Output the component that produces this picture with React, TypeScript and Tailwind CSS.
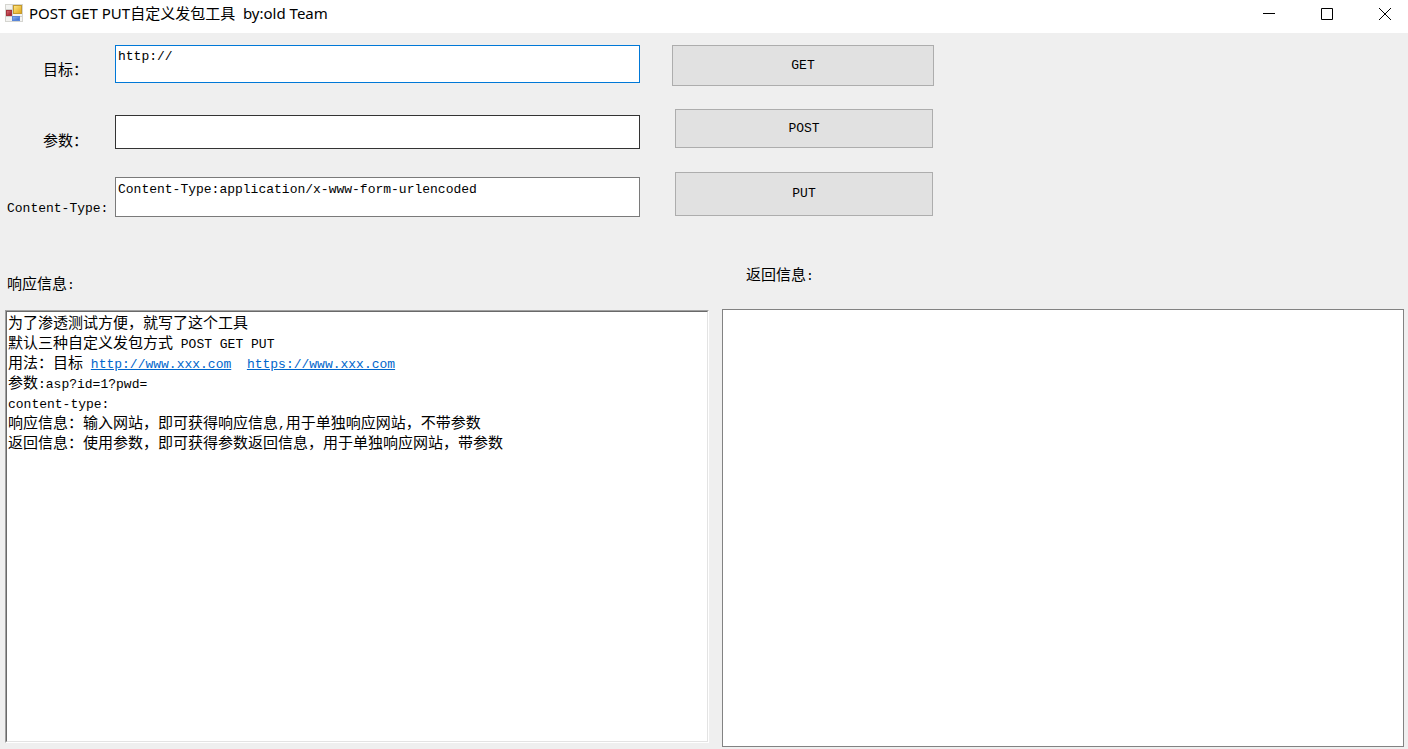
import { useState } from "react";
import clsx from "clsx";

function AppIcon() {
  return (
    <svg width="18" height="18" viewBox="0 0 18 18" aria-hidden="true">
      <defs>
        <linearGradient id="gold" x1="0" y1="0" x2="1" y2="1">
          <stop offset="0" stopColor="#ffe98a" />
          <stop offset="1" stopColor="#e0a414" />
        </linearGradient>
        <linearGradient id="red" x1="0" y1="0" x2="1" y2="1">
          <stop offset="0" stopColor="#d9707a" />
          <stop offset="1" stopColor="#9c1420" />
        </linearGradient>
        <linearGradient id="blue" x1="0" y1="0" x2="1" y2="1">
          <stop offset="0" stopColor="#8db6f5" />
          <stop offset="1" stopColor="#3566c8" />
        </linearGradient>
      </defs>
      <rect x="0.5" y="0.5" width="17" height="17" fill="#f3f3f1" stroke="#d5d5d0" />
      <path d="M7.5 1v16M1 5.5h6M1 12.5h16" stroke="#d0d0cc" />
      <rect x="8.5" y="1.5" width="8" height="8" fill="url(#gold)" stroke="#c59a2c" />
      <rect x="1.5" y="6.5" width="5" height="5" fill="url(#red)" stroke="#a5323c" />
      <rect x="7.5" y="12.5" width="7" height="4" fill="url(#blue)" stroke="#5a86d8" />
    </svg>
  );
}

function TitleBar() {
  return (
    <header className="flex h-[33px] items-start justify-between bg-white">
      <div className="flex h-[26px] items-center gap-[6px] pl-[5px]">
        <AppIcon />
        <h1 className="font-['Noto_Sans','Noto_Sans_CJK_SC',sans-serif] text-[15px] leading-5 whitespace-pre">
          POST GET PUT自定义发包工具  by:old Team
        </h1>
      </div>
      <div className="flex gap-3">
        <button aria-label="Minimize" className="flex h-7 w-[46px] items-center justify-center hover:bg-gray-200">
          <svg width="12" height="12" viewBox="0 0 12 12" fill="none" stroke="#000">
            <path d="M0 5.5h12" />
          </svg>
        </button>
        <button aria-label="Maximize" className="flex h-7 w-[46px] items-center justify-center hover:bg-gray-200">
          <svg width="12" height="12" viewBox="0 0 12 12" fill="none" stroke="#000">
            <path d="M0.5 0.5h11v11h-11z" />
          </svg>
        </button>
        <button aria-label="Close" className="flex h-7 w-[46px] items-center justify-center hover:bg-red-500">
          <svg width="12" height="12" viewBox="0 0 12 12" fill="none" stroke="#000">
            <path d="M0 0l12 12M12 0L0 12" />
          </svg>
        </button>
      </div>
    </header>
  );
}

// Latin text is set a little smaller than the 15px Chinese text
function Mono({ children }: { children: React.ReactNode }) {
  return <span className="font-['Liberation_Mono',monospace] text-[13px] whitespace-pre">{children}</span>;
}

const inputClass = "min-w-0 flex-1 border bg-white px-[2px] font-['Liberation_Mono',monospace] text-[13px] outline-none";
const buttonClass = "border border-[#adadad] bg-[#e1e1e1] font-['Liberation_Mono',monospace] text-[13px] hover:border-[#0078d7] hover:bg-[#e5f1fb]";

export default function App() {
  const [target, setTarget] = useState("http://");
  const [params, setParams] = useState("");
  const [contentType, setContentType] = useState("Content-Type:application/x-www-form-urlencoded");
  const [result, setResult] = useState("");

  return (
    <div className="flex min-h-screen flex-col bg-[#efefef] font-['Liberation_Mono','Noto_Sans_CJK_SC',monospace] text-[15px] text-black">
      <TitleBar />

      <form className="flex max-w-[934px] flex-col gap-[23px] pt-3" onSubmit={(e) => e.preventDefault()}>
        <div className="flex items-start">
          <label htmlFor="target" className="w-[115px] self-end pb-[6px] pl-[43px] leading-4">目标：</label>
          <input id="target" value={target} onChange={(e) => setTarget(e.target.value)} className={clsx(inputClass, "h-[38px] border-[#0078d7] pb-4")} />
          <button type="button" className={clsx(buttonClass, "ml-8 h-[41px] w-[262px]")}>GET</button>
        </div>
        <div className="flex items-end pr-px">
          <label htmlFor="params" className="w-[115px] pl-[43px] leading-3">参数：</label>
          <input id="params" value={params} onChange={(e) => setParams(e.target.value)} className={clsx(inputClass, "h-[34px] border-[#333333]")} />
          <button type="button" className={clsx(buttonClass, "mb-px ml-[35px] h-[39px] w-[258px]")}>POST</button>
        </div>
        <div className="flex items-end pr-px">
          <label htmlFor="content-type" className="w-[115px] pl-[7px] leading-4">
            <Mono>Content-Type:</Mono>
          </label>
          <input id="content-type" value={contentType} onChange={(e) => setContentType(e.target.value)} className={clsx(inputClass, "h-10 border-[#7a7a7a] pb-4")} />
          <button type="button" className={clsx(buttonClass, "mb-px ml-[35px] h-11 w-[258px]")}>PUT</button>
        </div>
      </form>

      <main className="grid flex-1 grid-cols-[704fr_682fr] gap-[13px] pr-1 pb-[2px] pl-[5px]">
        <section className="flex flex-col pt-[61px] pb-1">
          <h2 className="pl-[2px] leading-4">响应信息<Mono>:</Mono></h2>
          <div className="mt-4 flex flex-1 border border-t-[#a0a0a0] border-r-white border-b-white border-l-[#a0a0a0]">
            <div className="flex-1 border border-t-[#696969] border-r-[#e3e3e3] border-b-[#e3e3e3] border-l-[#696969] bg-white pt-[3px] pl-px leading-5">
              <p>为了渗透测试方便，就写了这个工具</p>
              <p>默认三种自定义发包方式<Mono> POST GET PUT</Mono></p>
              <p>
                用法：目标<Mono> <a href="http://www.xxx.com" className="text-[#0066cc] underline">http://www.xxx.com</a>  <a href="https://www.xxx.com" className="text-[#0066cc] underline">https://www.xxx.com</a></Mono>
              </p>
              <p>参数<Mono>:asp?id=1?pwd=</Mono></p>
              <p><Mono>content-type:</Mono></p>
              <p>响应信息：输入网站，即可获得响应信息<Mono>,</Mono>用于单独响应网站，不带参数</p>
              <p>返回信息：使用参数，即可获得参数返回信息，用于单独响应网站，带参数</p>
            </div>
          </div>
        </section>

        <section className="flex flex-col pt-[52px]">
          <label htmlFor="result" className="pl-6 leading-4">返回信息<Mono>:</Mono></label>
          <textarea
            id="result"
            value={result}
            onChange={(e) => setResult(e.target.value)}
            className="mt-6 flex-1 resize-none border border-[#828282] bg-white p-[2px] leading-5 outline-none"
          />
        </section>
      </main>
    </div>
  );
}
